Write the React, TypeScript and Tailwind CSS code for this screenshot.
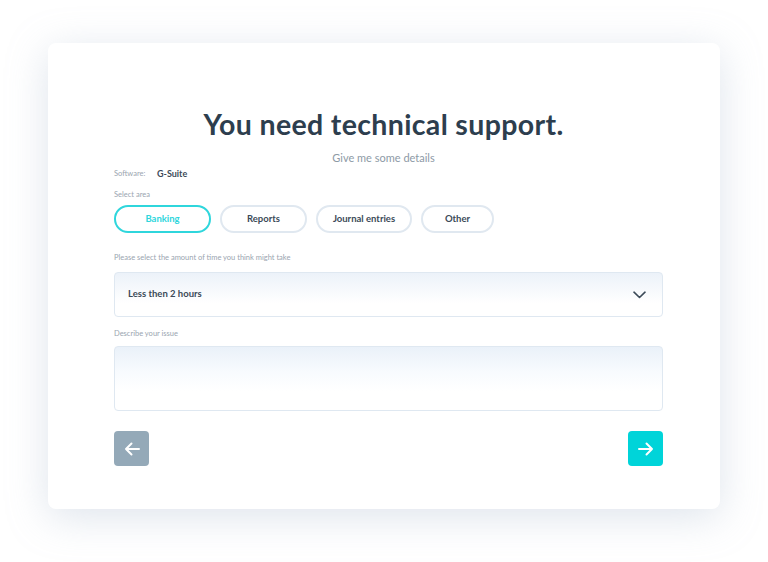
import React from "react";

const font = { fontFamily: "Lato, 'Open Sans', sans-serif" };

function Pill({ label, active, w }: { label: string; active?: boolean; w: string }) {
  return (
    <div
      className={`${w} h-[28px] rounded-full flex items-center justify-center text-[9.5px] font-bold ${
        active ? "border-[2px] border-[#2fd6dc] text-[#2fd6dc]" : "border-[2px] border-[#e0e8f0] text-[#3b4a58]"
      }`}
    >
      {label}
    </div>
  );
}

export default function App() {
  return (
    <div className="w-[768px] h-[562px] bg-white relative overflow-hidden" style={font}>
      <div className="absolute left-[48px] top-[43px] w-[672px] h-[466px] rounded-[8px] bg-white shadow-[0_8px_40px_rgba(160,178,200,0.35)]" />
      <div className="relative pt-[43px] pl-[48px]">
        <div className="w-[672px] h-[466px] pt-[64px] pl-[66px] pr-[57px] flex flex-col">
          <h1 className="text-center text-[28.5px] leading-[35px] font-bold text-[#2d3e4e] tracking-[0.35px] ml-[-10px]">
            You need technical support.
          </h1>
          <p className="text-center text-[11px] leading-[14px] text-[#8d9aa6] mt-[9px] ml-[-10px]">Give me some details</p>
          <div className="mt-[3px] flex items-center h-[12px]">
            <span className="text-[7.5px] text-[#9aa5b0] w-[43px]">Software:</span>
            <span className="text-[9px] font-bold text-[#3b4a58]">G-Suite</span>
          </div>
          <div className="mt-[10px] text-[7.5px] leading-[10px] text-[#9aa5b0]">Select area</div>
          <div className="mt-[5px] flex gap-[9px]">
            <Pill label="Banking" active w="w-[97px]" />
            <Pill label="Reports" w="w-[87px]" />
            <Pill label="Journal entries" w="w-[96px]" />
            <Pill label="Other" w="w-[73px]" />
          </div>
          <div className="mt-[20px] text-[7.5px] leading-[10px] text-[#9aa5b0]">
            Please select the amount of time you think might take
          </div>
          <div className="mt-[9px] h-[45px] rounded-[4px] border border-[#dfe8f1] bg-[linear-gradient(to_bottom,#ecf2f9,#ffffff_70%)] flex items-center pl-[13px] pr-[16px] justify-between">
            <span className="text-[9.5px] font-bold text-[#3b4a58]">Less then 2 hours</span>
            <svg width="13" height="8" viewBox="0 0 13 8" fill="none">
              <path d="M1 1.2L6.5 6.5L12 1.2" stroke="#3b4a58" strokeWidth="1.6" strokeLinecap="round" strokeLinejoin="round" />
            </svg>
          </div>
          <div className="mt-[12px] text-[7.5px] leading-[10px] text-[#9aa5b0]">Describe your issue</div>
          <div className="mt-[7px] h-[65px] rounded-[4px] border border-[#dfe8f1] bg-[linear-gradient(to_bottom,#eaf1f9,#f8fbfe_40%,#ffffff_70%)]" />
          <div className="mt-[20px] flex justify-between">
            <div className="w-[35px] h-[35px] rounded-[4px] bg-[#94a9b8] flex items-center justify-center">
              <svg width="16" height="14" viewBox="0 0 16 14" fill="none">
                <path d="M15 7H2M7.5 1.5L2 7L7.5 12.5" stroke="white" strokeWidth="2" strokeLinecap="round" strokeLinejoin="round" />
              </svg>
            </div>
            <div className="w-[35px] h-[35px] rounded-[4px] bg-[#00d4d9] flex items-center justify-center">
              <svg width="16" height="14" viewBox="0 0 16 14" fill="none">
                <path d="M1 7H14M8.5 1.5L14 7L8.5 12.5" stroke="white" strokeWidth="2" strokeLinecap="round" strokeLinejoin="round" />
              </svg>
            </div>
          </div>
        </div>
      </div>
    </div>
  );
}
